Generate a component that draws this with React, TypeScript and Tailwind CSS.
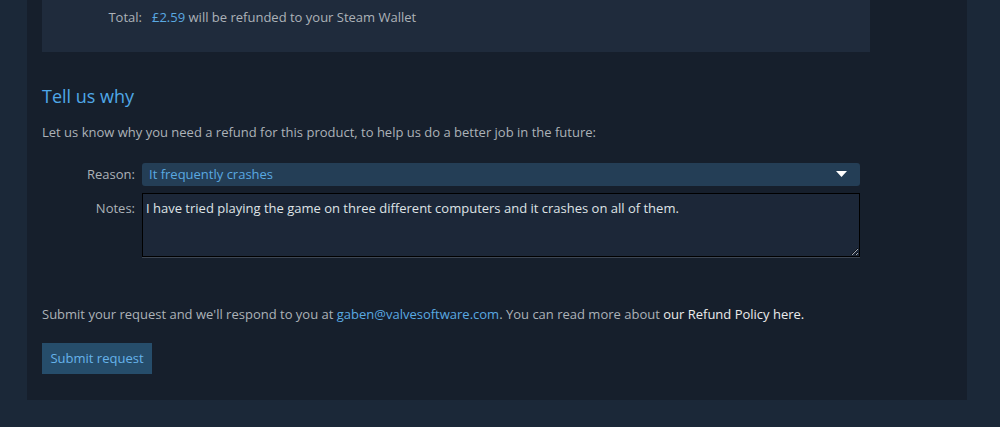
import React from "react";

export default function App() {
  return (
    <div className="w-[1000px] h-[427px] bg-[#1b2838] overflow-hidden" style={{ fontFamily: '"Open Sans", Arial, sans-serif' }}>
      <div className="ml-[27px] w-[940px] h-[400px] bg-[#161f2c] px-[15px]">
        <div className="w-[828px] h-[52px] bg-[#1f2b3c] pt-[8px] flex text-[13px] leading-[18px] text-[#acb2b8]">
          <div className="w-[100px] text-right">Total:</div>
          <div className="pl-[10px]">
            <span className="text-[#5aa9e1]">£2.59</span> will be refunded to your Steam Wallet
          </div>
        </div>

        <h2 className="mt-[32px] text-[18px] leading-[24px] text-[#4fa8e8]">Tell us why</h2>
        <p className="mt-[15px] text-[13px] leading-[18px] text-[#acb2b8]">
          Let us know why you need a refund for this product, to help us do a better job in the future:
        </p>

        <div className="mt-[22px] flex flex-col gap-[7px] w-[818px]">
          <div className="flex items-center gap-[7px]">
            <div className="w-[93px] text-right text-[13px] text-[#acb2b8]">Reason:</div>
            <div className="flex-1 h-[23px] rounded-[3px] bg-[#243e56] flex items-center justify-between pl-[7px] pr-[13px] text-[13px] text-[#5aa9e1]">
              <span>It frequently crashes</span>
              <svg width="11" height="7" viewBox="0 0 11 7"><path d="M0 0H11L5.5 6Z" fill="#ffffff" /></svg>
            </div>
          </div>
          <div className="flex items-start gap-[7px]">
            <div className="w-[93px] text-right text-[13px] leading-[18px] pt-[6px] text-[#acb2b8]">Notes:</div>
            <textarea
              className="flex-1 h-[64px] bg-[#1c2738] border border-black shadow-[0_1px_0_#3e4754] px-[3px] pt-[5px] text-[13px] leading-[18px] text-[#dfe3e6] outline-none"
              defaultValue="I have tried playing the game on three different computers and it crashes on all of them."
            />
          </div>
        </div>

        <p className="mt-[48px] text-[13px] leading-[18px] text-[#acb2b8]">
          Submit your request and we'll respond to you at{" "}
          <span className="text-[#5aa9e1]">gaben@valvesoftware.com</span>. You can read more about{" "}
          <span className="text-[#ebebeb]">our Refund Policy here.</span>
        </p>

        <button className="mt-[20px] h-[31px] w-[110px] bg-[#264d6b] text-[13px] text-[#66b3ea]">Submit request</button>
      </div>
    </div>
  );
}
